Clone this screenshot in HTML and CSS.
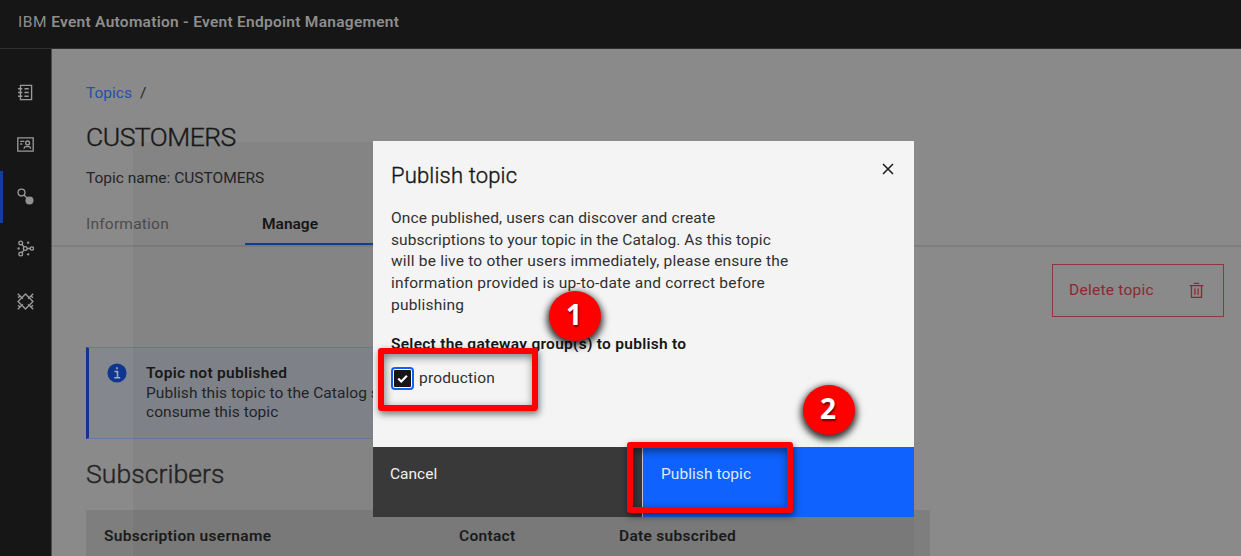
FILE: index.html
```html
<!DOCTYPE html>
<html lang="en">
<head>
<meta charset="utf-8">
<title>Event Endpoint Management</title>
<link rel="stylesheet" href="styles.css">
</head>
<body>
<div class="app">
  <header class="header"><span class="brand">IBM</span><span class="product">Event Automation - Event Endpoint Management</span></header>
  <div class="body">
    <nav class="rail">
      <a class="rail-item"><svg class="icon" viewBox="0 0 32 32"><path d="M6.500 2.500h21v27h-21zM2 9h8M2 16h8M2 23h8M14 9h8M14 16h8M14 23h8"/></svg></a>
      <a class="rail-item"><svg class="icon" viewBox="0 0 32 32"><path d="M1.500 3.500h29v25h-29zM6 10h8M6 15h4M13.500 24v-1q0-3 3-3h6q3 0 3 3v1"/><circle cx="20" cy="13" r="3.600"/></svg></a>
      <a class="rail-item rail-active"><svg class="icon" viewBox="0 0 32 32"><circle cx="8.500" cy="8.500" r="6.500"/><path d="M13 13l6 6"/><circle class="solid" cx="23.500" cy="23.500" r="7.600"/></svg></a>
      <a class="rail-item"><svg class="icon" viewBox="0 0 32 32"><circle cx="7" cy="5.500" r="3.500"/><circle cx="7" cy="26.500" r="3.500"/><circle cx="15.500" cy="16" r="3.500"/><circle cx="28" cy="16" r="3.200"/><path d="M9 8l4.500 5.500M9 24l4.500-5.500M19 16h6"/><circle class="solid" cx="21" cy="5" r="2.200"/><circle class="solid" cx="21" cy="27" r="2.200"/><circle class="solid" cx="3" cy="16" r="2.200"/></svg></a>
      <a class="rail-item"><svg class="icon" viewBox="0 0 32 32"><path d="M1.500 1.500L11 11M30.500 1.500L21 11M1.500 30.500L11 21M30.500 30.500L21 21M10 8l6-6 6 6M10 24l6 6 6-6M8 10l-6 6 6 6M24 10l6 6-6 6M2 9l3-3M30 9l-3-3M2 23l3 3M30 23l-3 3"/></svg></a>
    </nav>
    <main class="main">
      <div class="crumbs"><a class="link">Topics</a><span>/</span></div>
      <h1 class="title">CUSTOMERS</h1>
      <p class="subtitle">Topic name: CUSTOMERS</p>
      <div class="tabs"><span class="tab">Information</span><span class="tab tab-active">Manage</span></div>
      <div class="actions"><button class="delete"><span>Delete topic</span><svg class="trash" viewBox="0 0 32 32"><path d="M3 7h26M6.500 7v22h19V7M11 2.500h10M13 12v12M19 12v12"/></svg></button></div>
      <section class="notice">
        <svg class="info" viewBox="0 0 20 20"><circle cx="10" cy="10" r="9.600"/><path d="M7.500 8.500h3v6.300M7.200 14.800h6M10 4.300v2"/></svg>
        <div class="notice-text"><strong>Topic not published</strong><span>Publish this topic to the Catalog s</span><span>consume this topic</span></div>
      </section>
      <h2 class="section-title">Subscribers</h2>
      <div class="table-head"><span>Subscription username</span><span>Contact</span><span>Date subscribed</span></div>
    </main>
  </div>
</div>
<div class="shade"></div>
<div class="modal">
  <div class="modal-body">
    <div class="modal-top"><h3 class="modal-title">Publish topic</h3><svg class="close" viewBox="0 0 12 12"><path d="M1 1l10 10M11 1L1 11"/></svg></div>
    <p class="copy"><span class="line-first">Once published, users can discover and create</span><br><span class="line-second">subscriptions to your topic in the Catalog. As this topic</span><br>will be live to other users immediately, please ensure the<br>information provided is up-to-date and correct before<br>publishing</p>
    <p class="legend">Select the gateway group(s) to publish to</p>
    <label class="check"><span class="box"><svg class="tick" viewBox="0 0 18 18"><path d="M4.500 9l3.200 3.200 6-6"/></svg></span><span>production</span></label>
  </div>
  <div class="modal-footer"><button class="btn cancel">Cancel</button><button class="btn publish">Publish topic</button></div>
</div>
<div class="mark mark-check"></div>
<div class="mark mark-publish"></div>
<div class="step step-one">1</div>
<div class="step step-two">2</div>
</body>
</html>
```
FILE: styles.css
```css
* { box-sizing: border-box; }
body { margin: 0; width: 1241px; height: 556px; overflow: hidden; position: relative; background: #8a8a8a; color: #252525; font: 400 15.5px/20px Roboto, "Open Sans", sans-serif; }
h1, h2, h3, p { margin: 0; font-weight: 400; }
button { font: inherit; border: 0; text-align: left; }
.app { height: 556px; overflow: hidden; display: flex; flex-direction: column; }
.header { flex: none; height: 49px; padding: 12px 0 0 18px; display: flex; gap: 4px; background: #161616; border-bottom: 1px solid #303030; color: #8e8e8e; }
.brand { letter-spacing: .6px; }
.product { font-weight: 600; letter-spacing: .27px; }
.body { flex: 1; display: flex; min-height: 0; }
.rail { flex: none; width: 52px; background: #161616; border-right: 1px solid #4c4c4c; padding-top: 17px; }
.rail-item { height: 52.25px; display: flex; align-items: center; padding-left: 17px; }
.rail-active { border-left: 3px solid #103f9b; padding-left: 14px; }
.icon { width: 17px; height: 17px; fill: none; stroke: #9a9a9a; stroke-width: 2.5; }
.icon .solid { fill: #929292; stroke: none; }
.main { flex: 1; min-width: 0; display: flex; flex-direction: column; }
.crumbs { margin: 34px 0 0 34px; display: flex; gap: 8px; }
.link { color: #244f AA; color: #244faa; }
.title { margin: 15px 0 0 34px; font-size: 26.5px; line-height: 38px; letter-spacing: -.5px; color: #191919; font-weight: 300; -webkit-text-stroke: .4px #191919; }
.subtitle { margin: 12px 0 0 34px; }
.tabs { margin-top: 21px; height: 38px; display: flex; border-bottom: 2px solid #7e7e7e; }
.tab { width: 159px; padding: 5px 0 0 34px; color: #4d4d4d; letter-spacing: .22px; }
.tab-active { margin-left: 34px; padding-left: 17px; height: 36px; border-bottom: 2px solid #123f99; color: #171717; font-weight: 600; letter-spacing: 0; }
.actions { display: flex; justify-content: flex-end; padding: 17px 17px 0 0; }
.delete { width: 172px; height: 53px; padding: 0 18px 1px 16px; background: none; border: 1px solid #8f3740; color: #8c2830; display: flex; align-items: center; justify-content: space-between; letter-spacing: .26px; }
.trash { width: 17px; height: 17px; fill: none; stroke: #8c2830; stroke-width: 2.4; }
.notice { margin: 30px 0 0 34px; width: 620px; height: 92px; padding: 15px 16px; display: flex; align-items: flex-start; gap: 19px; background: #84888e; border: 1px solid #637ca4; border-left: 3px solid #0e3590; }
.info { flex: none; width: 20px; height: 20px; margin-left: 2px; fill: #0e3590; stroke: #a4abb8; stroke-width: 1.6; }
.info circle { stroke: none; }
.notice-text { padding-top: 1px; display: flex; flex-direction: column; line-height: 19.5px; white-space: nowrap; letter-spacing: .06px; }
.notice-text strong { font-weight: 600; color: #191919; letter-spacing: .27px; }
.section-title { margin: 16px 0 0 34px; font-size: 26.5px; line-height: 38px; font-weight: 300; letter-spacing: .08px; -webkit-text-stroke: .4px #252525; }
.table-head { flex: none; margin: 17px 0 0 34px; width: 844px; height: 60px; padding: 16px 18px; display: grid; grid-template-columns: 355px 160px 1fr; background: #7e7e7e; color: #1c1c1c; font-weight: 600; letter-spacing: .3px; }
.shade { position: absolute; left: 133px; top: 142px; width: 781px; height: 414px; background: rgba(0, 0, 0, .04); }
.modal { position: absolute; left: 373px; top: 141px; width: 541px; height: 376px; display: flex; flex-direction: column; background: #f4f4f4; }
.modal-body { flex: 1; padding: 20px 20px 0 18px; }
.modal-top { display: flex; justify-content: space-between; align-items: flex-start; }
.modal-title { font-size: 22px; line-height: 30px; color: #161616; font-weight: 300; letter-spacing: .17px; -webkit-text-stroke: .4px #161616; }
.close { width: 12px; height: 12px; margin-top: 2px; fill: none; stroke: #1b1b1b; stroke-width: 1.5; }
.copy { margin-top: 17px; line-height: 21.65px; white-space: nowrap; letter-spacing: .2px; color: #303030; }
.line-first { letter-spacing: .12px; }
.line-second { letter-spacing: .08px; }
.legend { margin-top: 18px; font-weight: 600; letter-spacing: .27px; color: #161616; }
.check { margin-top: 12px; height: 24px; display: flex; align-items: center; gap: 5px; letter-spacing: .18px; color: #303030; }
.box { width: 23px; height: 23px; padding: 1px; border: 2px solid #0f62fe; border-radius: 4px; background: #fff; }
.tick { display: block; width: 17px; height: 17px; border-radius: 1px; background: #161616; fill: none; stroke: #fff; stroke-width: 2.2; }
.modal-footer { height: 70px; display: flex; }
.btn { flex: 1; padding: 17px 17px 0; display: flex; color: #f0f0f0; }
.cancel { background: #393939; }
.publish { flex: none; width: 272px; padding-left: 18px; background: #0f62fe; border-left: 1px solid #c6c6c6; letter-spacing: .06px; color: #dfe9ff; }
.mark { position: absolute; border: 6px solid #f00; border-radius: 3px; box-shadow: 1px 3px 7px rgba(0, 0, 0, .55), inset 1px 3px 8px rgba(0, 0, 0, .5); }
.mark-check { left: 378px; top: 348px; width: 160px; height: 63px; }
.mark-publish { left: 627px; top: 442px; width: 166px; height: 71px; }
.step { position: absolute; width: 52px; height: 50px; padding-right: 2px; border-radius: 50%; background: #f00; box-shadow: 0 3px 7px 2px rgba(0, 0, 0, .8); color: #fff; text-align: center; font: 700 28px/47px "Open Sans", "Noto Sans", sans-serif; text-shadow: 1px 2px 2px rgba(0, 0, 0, .55); }
.step-one { left: 549px; top: 291px; }
.step-two { left: 803px; top: 385px; }
```
